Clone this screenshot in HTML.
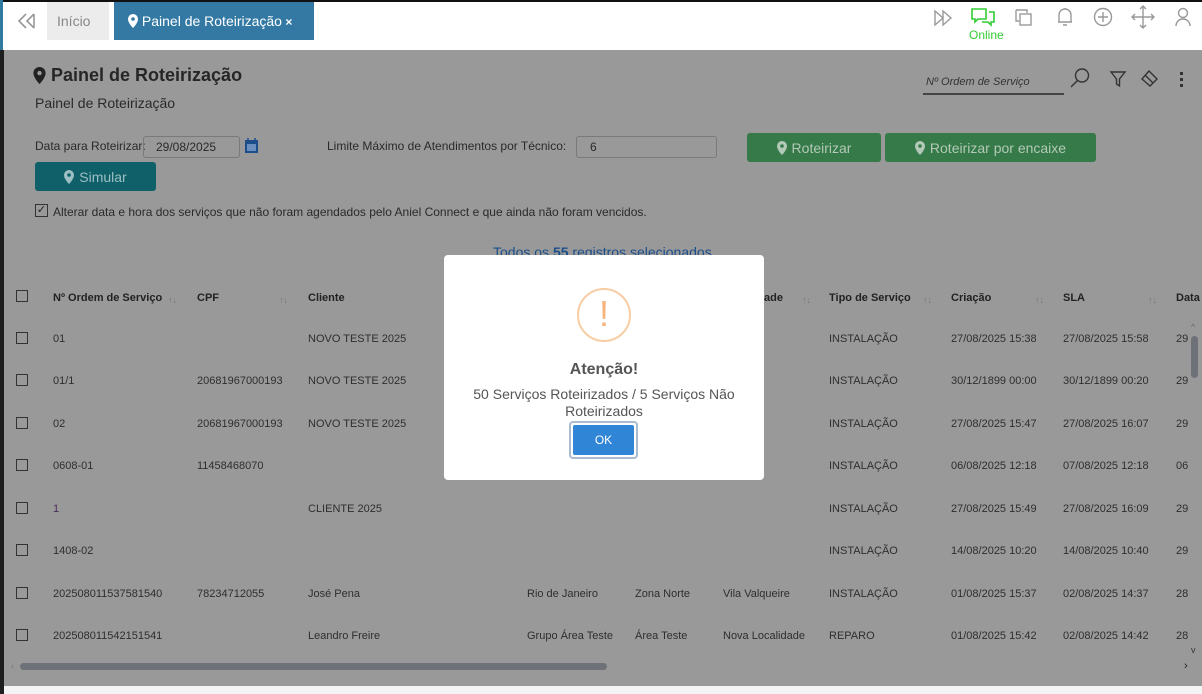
<!DOCTYPE html>
<html><head><meta charset="utf-8"><style>
*{margin:0;padding:0;box-sizing:border-box}
body{width:1202px;height:694px;overflow:hidden;background:#fff;font-family:"Liberation Sans",Arial,sans-serif;position:relative}
.a{position:absolute;white-space:nowrap}
.t{font-size:11px;color:#2e2e2e}
.h{font-size:11px;color:#222;font-weight:bold}
.cb{position:absolute;width:12px;height:12px;border:1px solid #333;left:16px}
.ar{font-size:9px;color:#777}
.btn{position:absolute;border-radius:3px;color:#b3c9b7;font-size:14px;display:flex;align-items:center;justify-content:center;gap:5px}
</style></head><body>
<div class="a" style="left:0;top:0;width:1202px;height:2px;background:#111"></div>
<div class="a" style="left:0;top:0;width:3px;height:50px;background:#2e7aa0"></div>
<svg class="a" style="left:17px;top:12px" width="20" height="18" viewBox="0 0 20 18"><path d="M9 2L2 9l7 7M17 2l-7 7 7 7M17 2v14" fill="none" stroke="#999" stroke-width="1.6"/></svg>
<div class="a" style="left:47px;top:2px;width:62px;height:38px;background:#ececec;color:#888;font-size:14px;line-height:38px;padding-left:10px">Início</div>
<div class="a" style="left:114px;top:2px;width:200px;height:38px;background:#3379a4;color:#fff;font-size:14px;line-height:38px;padding-left:14px">
<svg style="vertical-align:-2px" width="10" height="14" viewBox="0 0 10 14"><path d="M5 0a5 5 0 0 0-5 5c0 4 5 9 5 9s5-5 5-9a5 5 0 0 0-5-5z" fill="#fff"/><circle cx="5" cy="5" r="1.8" fill="#3379a4"/></svg> Painel de Roteirização<b style="font-size:12px"> ×</b></div>
<svg class="a" style="left:933px;top:9px" width="22" height="18" viewBox="0 0 22 18"><path d="M2 2l8 7-8 7zM10 2l8 7-8 7z" fill="none" stroke="#999" stroke-width="1.4"/></svg>
<svg class="a" style="left:971px;top:8px" width="26" height="20" viewBox="0 0 26 20"><path d="M1 1h14v10H7l-3 3v-3H1z" fill="none" stroke="#3c3" stroke-width="1.6"/><path d="M18 4h5v10h-3v3l-3-3h-6" fill="none" stroke="#3c3" stroke-width="1.6"/></svg>
<div class="a" style="left:969px;top:28px;font-size:12px;color:#3c3">Online</div>
<svg class="a" style="left:1014px;top:8px" width="20" height="20" viewBox="0 0 20 20"><path d="M2 2h11v3M2 2v11h3" fill="none" stroke="#999" stroke-width="1.4"/><rect x="6" y="6" width="11" height="11" fill="none" stroke="#999" stroke-width="1.4"/></svg>
<svg class="a" style="left:1055px;top:6px" width="20" height="22" viewBox="0 0 20 22"><path d="M4 16V9a6 6 0 0 1 12 0v7H3h14M8 19h4M10 2v1" fill="none" stroke="#999" stroke-width="1.4"/></svg>
<svg class="a" style="left:1093px;top:7px" width="20" height="20" viewBox="0 0 20 20"><circle cx="10" cy="10" r="8.5" fill="none" stroke="#999" stroke-width="1.4"/><path d="M10 5v10M5 10h10" stroke="#999" stroke-width="1.4"/></svg>
<svg class="a" style="left:1131px;top:5px" width="24" height="24" viewBox="0 0 24 24"><path d="M12 1v22M1 12h22M9 4l3-3 3 3M9 20l3 3 3-3M4 9l-3 3 3 3M20 9l3 3-3 3" fill="none" stroke="#999" stroke-width="1.4"/></svg>
<svg class="a" style="left:1174px;top:7px" width="18" height="20" viewBox="0 0 18 20"><circle cx="9" cy="6" r="4.5" fill="none" stroke="#999" stroke-width="1.4"/><path d="M2 19c0-4 3-7 7-7s7 3 7 7" fill="none" stroke="#999" stroke-width="1.4"/></svg>

<div class="a" style="left:0;top:50px;width:1202px;height:636px;background:#999"></div>
<div class="a" style="left:0;top:50px;width:4px;height:644px;background:#1e1e1e"></div>
<div class="a" style="left:4px;top:686px;width:1198px;height:8px;background:#f4f4f4"></div>

<svg class="a" style="left:33px;top:67px" width="13" height="17" viewBox="0 0 10 14"><path d="M5 0a5 5 0 0 0-5 5c0 4 5 9 5 9s5-5 5-9a5 5 0 0 0-5-5z" fill="#222"/><circle cx="5" cy="5" r="1.8" fill="#999"/></svg>
<div class="a" style="left:51px;top:65px;font-size:18px;font-weight:bold;color:#262626">Painel de Roteirização</div>
<div class="a" style="left:35px;top:95px;font-size:14px;color:#2a2a2a">Painel de Roteirização</div>
<div class="a" style="left:926px;top:76px;font-size:11px;font-style:italic;color:#333">Nº Ordem de Serviço</div>
<div class="a" style="left:923px;top:93px;width:141px;height:2px;background:#444"></div>
<svg class="a" style="left:1069px;top:67px" width="22" height="22" viewBox="0 0 22 22"><circle cx="13" cy="8.5" r="6.5" fill="none" stroke="#333" stroke-width="1.4"/><path d="M8.5 13.5L2 20" stroke="#333" stroke-width="1.4"/></svg>
<svg class="a" style="left:1109px;top:70px" width="18" height="18" viewBox="0 0 18 18"><path d="M2 2h14l-5.5 7v7l-3-2V9z" fill="none" stroke="#333" stroke-width="1.4"/></svg>
<svg class="a" style="left:1139px;top:69px" width="20" height="20" viewBox="0 0 20 20"><path d="M10 2l8 8-7 7-8-7zM6 6l8 8" fill="none" stroke="#333" stroke-width="1.4"/></svg>
<div class="a" style="left:1180px;top:72px;width:3px;height:3px;background:#333;box-shadow:0 6px #333,0 12px #333"></div>

<div class="a" style="left:35px;top:139px;font-size:12px;color:#2a2a2a">Data para Roteirizar:</div>
<div class="a" style="left:143px;top:136px;width:97px;height:22px;border:1px solid #7a7a7a;border-radius:3px;font-size:12px;color:#2a2a2a;line-height:20px;padding-left:12px">29/08/2025</div>
<svg class="a" style="left:245px;top:138px" width="13" height="15" viewBox="0 0 13 15"><rect x="0" y="2" width="13" height="13" fill="#1c4e8c"/><rect x="2" y="6" width="9" height="7" fill="#6a8fbf"/><path d="M3 0v3M10 0v3" stroke="#1c4e8c" stroke-width="1.5"/></svg>
<div class="a" style="left:327px;top:139px;font-size:12px;color:#2a2a2a">Limite Máximo de Atendimentos por Técnico:</div>
<div class="a" style="left:576px;top:136px;width:141px;height:22px;border:1px solid #7a7a7a;border-radius:3px;font-size:12px;color:#2a2a2a;line-height:20px;padding-left:13px">6</div>
<div class="btn" style="left:747px;top:133px;width:134px;height:29px;background:#357a48"><svg width="10" height="14" viewBox="0 0 10 14"><path d="M5 0a5 5 0 0 0-5 5c0 4 5 9 5 9s5-5 5-9a5 5 0 0 0-5-5z" fill="#b3c9b7"/><circle cx="5" cy="5" r="1.8" fill="#357a48"/></svg>Roteirizar</div>
<div class="btn" style="left:885px;top:133px;width:211px;height:29px;background:#357a48"><svg width="10" height="14" viewBox="0 0 10 14"><path d="M5 0a5 5 0 0 0-5 5c0 4 5 9 5 9s5-5 5-9a5 5 0 0 0-5-5z" fill="#b3c9b7"/><circle cx="5" cy="5" r="1.8" fill="#357a48"/></svg>Roteirizar por encaixe</div>
<div class="btn" style="left:35px;top:162px;width:121px;height:29px;background:#0f6068;color:#9cbfc3"><svg width="10" height="14" viewBox="0 0 10 14"><path d="M5 0a5 5 0 0 0-5 5c0 4 5 9 5 9s5-5 5-9a5 5 0 0 0-5-5z" fill="#9cbfc3"/><circle cx="5" cy="5" r="1.8" fill="#0f6068"/></svg>Simular</div>
<div class="a" style="left:35px;top:204px;width:13px;height:13px;border:1px solid #333;font-size:11px;line-height:11px;color:#222;text-align:center">✓</div>
<div class="a" style="left:53px;top:205px;font-size:12px;color:#2a2a2a">Alterar data e hora dos serviços que não foram agendados pelo Aniel Connect e que ainda não foram vencidos.</div>
<div class="a" style="left:493px;top:244px;font-size:14px;color:#1c4f8a">Todos os <b>55</b> registros selecionados</div>

<div class="cb" style="top:290px"></div>
<div class="a h" style="left:53px;top:292px">Nº Ordem de Serviço</div><div class="a ar" style="left:168px;top:295px">↑↓</div>
<div class="a h" style="left:197px;top:292px">CPF</div><div class="a ar" style="left:279px;top:295px">↑↓</div>
<div class="a h" style="left:308px;top:292px">Cliente</div>
<div class="a h" style="left:764px;top:292px">ade</div><div class="a ar" style="left:802px;top:295px">↑↓</div>
<div class="a h" style="left:829px;top:292px">Tipo de Serviço</div><div class="a ar" style="left:923px;top:295px">↑↓</div>
<div class="a h" style="left:951px;top:292px">Criação</div><div class="a ar" style="left:1035px;top:295px">↑↓</div>
<div class="a h" style="left:1063px;top:292px">SLA</div><div class="a ar" style="left:1148px;top:295px">↑↓</div>
<div class="a h" style="left:1176px;top:292px">Data</div>

<div class="cb" style="top:332px"></div><div class="a t" style="left:53px;top:333px">01</div><div class="a t" style="left:308px;top:333px">NOVO TESTE 2025</div><div class="a t" style="left:829px;top:333px">INSTALAÇÃO</div><div class="a t" style="left:951px;top:333px">27/08/2025 15:38</div><div class="a t" style="left:1063px;top:333px">27/08/2025 15:58</div><div class="a t" style="left:1176px;top:333px">29</div>
<div class="cb" style="top:374px"></div><div class="a t" style="left:53px;top:375px">01/1</div><div class="a t" style="left:197px;top:375px">20681967000193</div><div class="a t" style="left:308px;top:375px">NOVO TESTE 2025</div><div class="a t" style="left:829px;top:375px">INSTALAÇÃO</div><div class="a t" style="left:951px;top:375px">30/12/1899 00:00</div><div class="a t" style="left:1063px;top:375px">30/12/1899 00:20</div><div class="a t" style="left:1176px;top:375px">29</div>
<div class="cb" style="top:417px"></div><div class="a t" style="left:53px;top:418px">02</div><div class="a t" style="left:197px;top:418px">20681967000193</div><div class="a t" style="left:308px;top:418px">NOVO TESTE 2025</div><div class="a t" style="left:829px;top:418px">INSTALAÇÃO</div><div class="a t" style="left:951px;top:418px">27/08/2025 15:47</div><div class="a t" style="left:1063px;top:418px">27/08/2025 16:07</div><div class="a t" style="left:1176px;top:418px">29</div>
<div class="cb" style="top:459px"></div><div class="a t" style="left:53px;top:460px">0608-01</div><div class="a t" style="left:197px;top:460px">11458468070</div><div class="a t" style="left:829px;top:460px">INSTALAÇÃO</div><div class="a t" style="left:951px;top:460px">06/08/2025 12:18</div><div class="a t" style="left:1063px;top:460px">07/08/2025 12:18</div><div class="a t" style="left:1176px;top:460px">06</div>
<div class="cb" style="top:502px"></div><div class="a t" style="left:53px;top:503px;color:#4a2a5a">1</div><div class="a t" style="left:308px;top:503px">CLIENTE 2025</div><div class="a t" style="left:829px;top:503px">INSTALAÇÃO</div><div class="a t" style="left:951px;top:503px">27/08/2025 15:49</div><div class="a t" style="left:1063px;top:503px">27/08/2025 16:09</div><div class="a t" style="left:1176px;top:503px">29</div>
<div class="cb" style="top:544px"></div><div class="a t" style="left:53px;top:545px">1408-02</div><div class="a t" style="left:829px;top:545px">INSTALAÇÃO</div><div class="a t" style="left:951px;top:545px">14/08/2025 10:20</div><div class="a t" style="left:1063px;top:545px">14/08/2025 10:40</div><div class="a t" style="left:1176px;top:545px">29</div>
<div class="cb" style="top:587px"></div><div class="a t" style="left:53px;top:588px">202508011537581540</div><div class="a t" style="left:197px;top:588px">78234712055</div><div class="a t" style="left:308px;top:588px">José Pena</div><div class="a t" style="left:527px;top:588px">Rio de Janeiro</div><div class="a t" style="left:635px;top:588px">Zona Norte</div><div class="a t" style="left:723px;top:588px">Vila Valqueire</div><div class="a t" style="left:829px;top:588px">INSTALAÇÃO</div><div class="a t" style="left:951px;top:588px">01/08/2025 15:37</div><div class="a t" style="left:1063px;top:588px">02/08/2025 14:37</div><div class="a t" style="left:1176px;top:588px">28</div>
<div class="cb" style="top:629px"></div><div class="a t" style="left:53px;top:630px">202508011542151541</div><div class="a t" style="left:308px;top:630px">Leandro Freire</div><div class="a t" style="left:527px;top:630px">Grupo Área Teste</div><div class="a t" style="left:635px;top:630px">Área Teste</div><div class="a t" style="left:723px;top:630px">Nova Localidade</div><div class="a t" style="left:829px;top:630px">REPARO</div><div class="a t" style="left:951px;top:630px">01/08/2025 15:42</div><div class="a t" style="left:1063px;top:630px">02/08/2025 14:42</div><div class="a t" style="left:1176px;top:630px">28</div>

<div class="a" style="left:1191px;top:336px;width:7px;height:42px;border-radius:4px;background:#6e7278"></div>
<div class="a" style="left:1191px;top:322px;font-size:9px;color:#666">^</div>
<div class="a" style="left:1191px;top:645px;font-size:9px;color:#333">v</div>
<div class="a" style="left:20px;top:663px;width:587px;height:7px;border-radius:4px;background:#6e7278"></div>
<div class="a" style="left:11px;top:661px;font-size:9px;color:#777">‹</div>
<div class="a" style="left:1184px;top:660px;font-size:11px;color:#222">›</div>

<div class="a" style="left:444px;top:255px;width:320px;height:225px;background:#fff;border-radius:4px"></div>
<div class="a" style="left:577px;top:288px;width:54px;height:54px;border:2px solid #f8cda4;border-radius:50%;color:#f6b47c;font-size:36px;text-align:center;line-height:48px">!</div>
<div class="a" style="left:444px;top:361px;width:320px;text-align:center;font-size:16px;font-weight:bold;color:#555">Atenção!</div>
<div class="a" style="left:444px;top:386px;width:320px;text-align:center;font-size:14px;color:#555;line-height:17px;white-space:normal">50 Serviços Roteirizados / 5 Serviços Não<br>Roteirizados</div>
<div class="a" style="left:569px;top:421px;width:69px;height:38px;border:2px solid #a9bcd0;border-radius:4px;padding:2px"><div style="width:100%;height:100%;background:#3085d6;border-radius:2px;color:#fff;font-size:12px;text-align:center;line-height:30px">OK</div></div>
</body></html>
